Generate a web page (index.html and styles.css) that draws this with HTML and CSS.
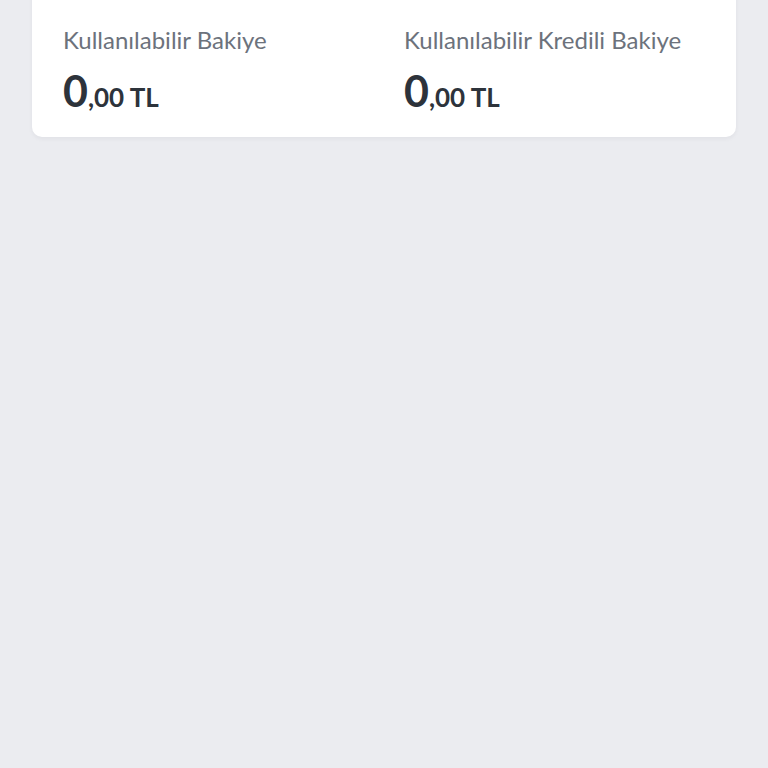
FILE: index.html
```html
<!doctype html>
<html lang="tr">
  <head>
    <meta charset="UTF-8" />
    <meta name="viewport" content="width=device-width, initial-scale=1.0" />
    <title>Bakiye</title>
    <link rel="stylesheet" href="styles.css">
  </head>
  <body>
    <div class="page">
      <div class="balance-card">
        <div class="balance">
          <div class="balance-label">Kullanılabilir Bakiye</div>
          <div class="balance-amount"><span class="int">0</span><span class="dec">,00 TL</span></div>
        </div>
        <div class="balance">
          <div class="balance-label">Kullanılabilir Kredili Bakiye</div>
          <div class="balance-amount"><span class="int">0</span><span class="dec">,00 TL</span></div>
        </div>
      </div>
    </div>
  </body>
</html>
```

FILE: styles.css
```css
html,
body {
  margin: 0;
  padding: 0;
  width: 100%;
  height: 100%;
  background-color: #ebecf0;
  font-family: Lato, "Open Sans", sans-serif;
}
.page {
  padding: 0 32px;
}
.balance-card {
  margin-top: -20px;
  padding: 46px 31px 14px;
  display: grid;
  grid-template-columns: 1fr 1fr;
  gap: 40px;
  background-color: #fff;
  border-radius: 10px;
  box-shadow: 0 2px 4px rgba(30, 40, 60, 0.05);
}
.balance-label {
  font-size: 24px;
  line-height: 28px;
  color: #6c727c;
}
.balance-amount {
  margin-top: 15px;
  color: #2d333b;
  line-height: 44px;
}
.balance-amount .int {
  font-size: 43px;
  font-weight: 700;
}
.balance-amount .dec {
  font-size: 26px;
  font-weight: 700;
}
```
